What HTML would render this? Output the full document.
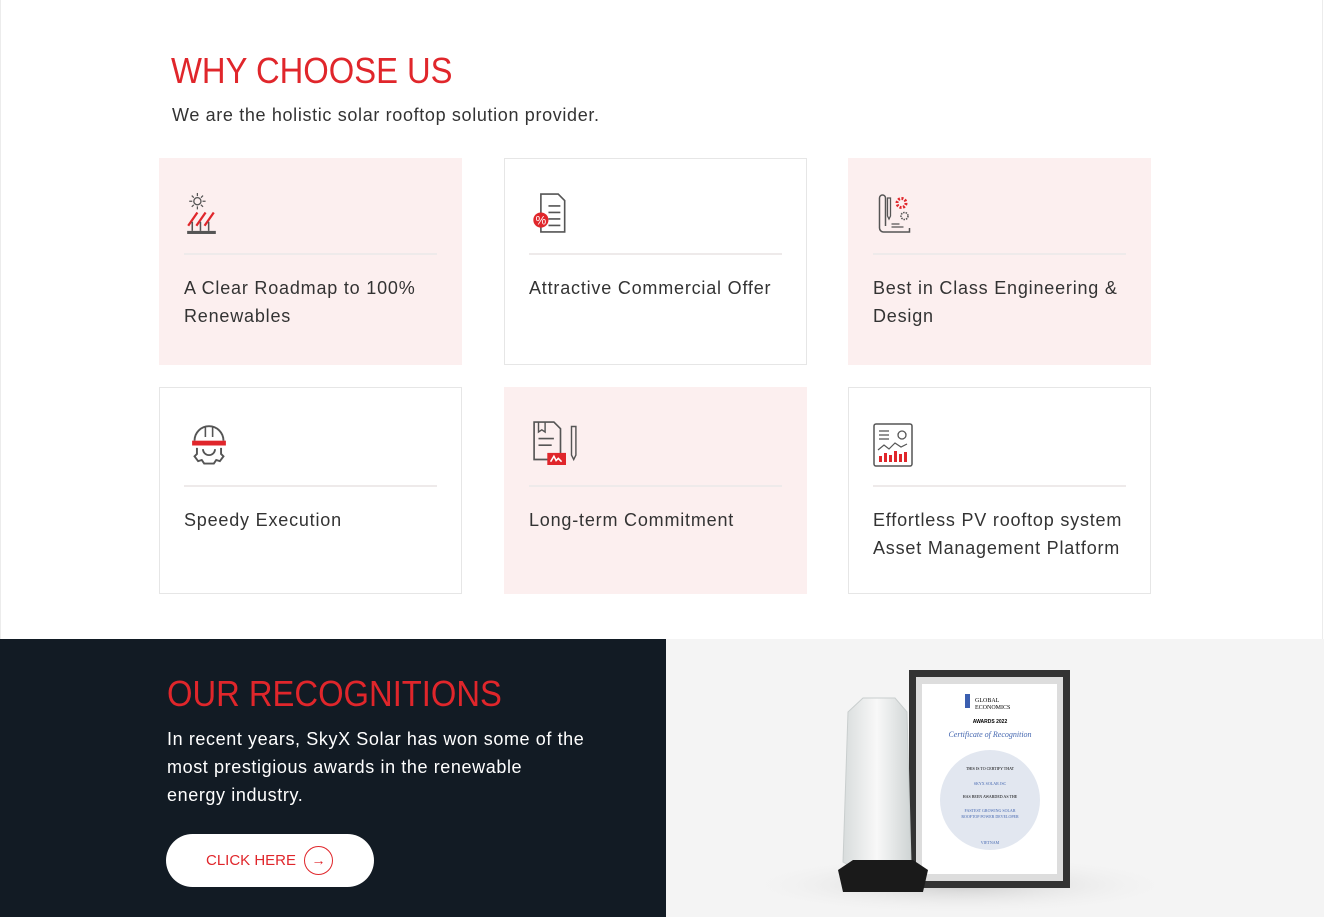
<!DOCTYPE html>
<html><head><meta charset="utf-8"><style>
*{margin:0;padding:0;box-sizing:border-box}
body{width:1324px;height:917px;overflow:hidden;background:#fff;font-family:"Liberation Sans",sans-serif;position:relative}
.edge{position:absolute;top:0;bottom:278px;width:1px;background:#ececec}
h2{position:absolute;font-weight:normal;color:#e0262b;font-size:36px;transform:scaleX(0.91);transform-origin:left top;white-space:nowrap}
.sub{position:absolute;left:172px;top:105px;font-size:18px;color:#333;letter-spacing:0.65px}
.card{position:absolute;width:303px;height:207px;border:1px solid #e6e6e6;background:#fff}
.card.p{background:#fcefef;border-color:#fcefef}
.card svg{position:absolute}
.card .ln{position:absolute;left:24px;right:24px;top:94px;height:2px;background:#eeeaea}
.card .t{position:absolute;left:24px;top:115px;font-size:18px;line-height:28px;color:#333;width:270px;letter-spacing:0.8px}
.dark{position:absolute;left:0;top:639px;width:666px;height:278px;background:#121b24}
.light{position:absolute;left:666px;top:639px;width:658px;height:278px;background:#f4f4f4}
.dark p{position:absolute;left:167px;top:86px;width:460px;font-size:18px;line-height:28px;color:#fff;letter-spacing:0.6px;white-space:nowrap}
.btn{position:absolute;left:166px;top:195px;width:208px;height:53px;border-radius:27px;background:#fff;color:#e0262b;font-size:15px}
.btn span{position:absolute;left:40px;top:18px}
.btn i{position:absolute;left:138px;top:12px;width:29px;height:29px;border:1px solid #e0262b;border-radius:50%;font-style:normal;text-align:center;line-height:26px;font-size:14px}
</style></head><body>
<div class="edge" style="left:0"></div><div class="edge" style="left:1322px"></div>
<h2 style="left:171px;top:50px">WHY CHOOSE US</h2>
<div class="sub">We are the holistic solar rooftop solution provider.</div>

<div class="card p" style="left:159px;top:158px">
<svg style="left:20px;top:33px" width="44" height="43" viewBox="2 3 31 42"><circle cx="13" cy="12" r="3.5" fill="none" stroke="#555" stroke-width="1.3"/><g stroke="#555" stroke-width="1.2"><path d="M13 4v3M13 17v3M5 12h3M18 12h3M7.5 6.5l2 2M16.5 15.5l2 2M18.5 6.5l-2 2M9.5 15.5l-2 2"/></g><g stroke="#e0262b" stroke-width="2.2"><path d="M4 36l9-13M12 36l9-13M20 36l9-13"/></g><g stroke="#555" stroke-width="1.5"><path d="M8 32v9M16 32v9M24 32v9"/></g><rect x="3" y="41" width="28" height="3" fill="#555"/></svg>
<div class="ln"></div><div class="t">A Clear Roadmap to 100% Renewables</div></div>

<div class="card" style="left:504px;top:158px">
<svg style="left:24px;top:34px" width="40" height="40" viewBox="2 4 31 37"><path d="M10 5h16l6 6v29H10z" fill="#fff" stroke="#555" stroke-width="1.5"/><path d="M17 16h11M17 22h11M17 28h11M17 34h11" stroke="#555" stroke-width="1.5"/><circle cx="10" cy="29" r="7" fill="#e0262b"/><text x="10" y="33" font-size="11" fill="#fff" text-anchor="middle" font-family="Liberation Sans">%</text></svg>
<div class="ln"></div><div class="t">Attractive Commercial Offer</div></div>

<div class="card p" style="left:848px;top:158px">
<svg style="left:26px;top:35px" width="39" height="39" viewBox="5 4 32 39"><path d="M6 8v30a4 4 0 004 4h26v-4M6 8a3 3 0 016 0v28" fill="none" stroke="#555" stroke-width="1.5"/><path d="M14 8h3v18l-1.5 3-1.5-3z" fill="none" stroke="#555" stroke-width="1.3"/><path d="M18 34h8M18 37h12" stroke="#555" stroke-width="1.3"/><circle cx="28" cy="13" r="4.5" fill="none" stroke="#e0262b" stroke-width="3" stroke-dasharray="2 1.5"/><circle cx="31" cy="26" r="3.5" fill="none" stroke="#555" stroke-width="1.6" stroke-dasharray="1.5 1"/></svg>
<div class="ln"></div><div class="t">Best in Class Engineering &amp; Design</div></div>

<div class="card" style="left:159px;top:387px">
<svg style="left:30px;top:37px" width="38" height="41" viewBox="7 7 30 34"><path d="M10 20a12 12 0 0124 0" fill="none" stroke="#555" stroke-width="1.6"/><path d="M19 9v8M25 9v8" stroke="#555" stroke-width="1.3"/><rect x="8" y="20" width="28" height="4" fill="#e0262b"/><path d="M12 26v5l-2 2 3 4 3-1 2 3h8l2-3 3 1 3-4-2-2v-5" fill="none" stroke="#555" stroke-width="1.6"/><path d="M17 27a5 5 0 0010 0" fill="none" stroke="#555" stroke-width="1.5"/></svg>
<div class="ln" style="top:97px"></div><div class="t" style="top:118px">Speedy Execution</div></div>

<div class="card p" style="left:504px;top:387px">
<svg style="left:26px;top:33px" width="48" height="44" viewBox="3 3 40 40"><path d="M4 4h18l6 6v28H4z" fill="none" stroke="#555" stroke-width="1.5"/><path d="M8 4v9l3-2 3 2V4" fill="none" stroke="#555" stroke-width="1.3"/><path d="M8 19h14M8 25h12" stroke="#555" stroke-width="1.5"/><rect x="16" y="32" width="17" height="11" fill="#e0262b"/><path d="M19 40l3-5 2 4 2-2 3 3" stroke="#fff" fill="none" stroke-width="1.4"/><path d="M38 8v26l2 4 2-4V8z" fill="none" stroke="#555" stroke-width="1.3"/></svg>
<div class="ln" style="top:97px"></div><div class="t" style="top:118px">Long-term Commitment</div></div>

<div class="card" style="left:848px;top:387px">
<svg style="left:24px;top:34px" width="40" height="46" viewBox="2 3 40 44"><rect x="3" y="4" width="38" height="42" rx="2" fill="none" stroke="#555" stroke-width="1.5"/><path d="M8 11h10M8 15h10M8 19h10" stroke="#555" stroke-width="1.3"/><circle cx="31" cy="15" r="4" fill="none" stroke="#555" stroke-width="1.3"/><path d="M7 30l6-5 5 4 6-6 6 4 6-3" fill="none" stroke="#555" stroke-width="1.2"/><g fill="#e0262b"><rect x="8" y="36" width="3" height="6"/><rect x="13" y="33" width="3" height="9"/><rect x="18" y="35" width="3" height="7"/><rect x="23" y="31" width="3" height="11"/><rect x="28" y="34" width="3" height="8"/><rect x="33" y="32" width="3" height="10"/></g></svg>
<div class="ln" style="top:97px"></div><div class="t" style="top:118px">Effortless PV rooftop system Asset Management Platform</div></div>

<div class="dark">
<h2 style="left:167px;top:34px">OUR RECOGNITIONS</h2>
<p>In recent years, SkyX Solar has won some of the<br>most prestigious awards in the renewable<br>energy industry.</p>
<div class="btn"><span>CLICK HERE</span><i>→</i></div>
</div>
<div class="light">
<svg width="658" height="278" viewBox="666 639 658 278" style="position:absolute;left:0;top:0">
<defs><radialGradient id="sh" cx="0.5" cy="0.5" r="0.5"><stop offset="0" stop-color="#ccc"/><stop offset="1" stop-color="#f4f4f4" stop-opacity="0"/></radialGradient>
<linearGradient id="gl" x1="0" x2="1"><stop offset="0" stop-color="#d8dcdc"/><stop offset="0.5" stop-color="#f8f8f8"/><stop offset="1" stop-color="#cfd4d4"/></linearGradient></defs>
<ellipse cx="960" cy="885" rx="220" ry="30" fill="url(#sh)"/>
<rect x="909" y="670" width="161" height="218" fill="#333"/>
<rect x="916" y="677" width="147" height="204" fill="#ddd"/>
<rect x="922" y="684" width="135" height="190" fill="#fff"/>
<circle cx="990" cy="800" r="50" fill="#e2e7f0"/>
<text x="990" y="723" font-size="5" text-anchor="middle" font-family="Liberation Sans" font-weight="bold">AWARDS 2022</text>
<text x="990" y="737" font-size="8" text-anchor="middle" fill="#4467b0" font-style="italic" font-family="Liberation Serif">Certificate of Recognition</text>
<rect x="965" y="694" width="5" height="14" fill="#3b5fb0"/>
<text x="975" y="702" font-size="6" font-family="Liberation Serif">GLOBAL</text>
<text x="975" y="709" font-size="6" font-family="Liberation Serif">ECONOMICS</text>
<text x="990" y="770" font-size="4" text-anchor="middle" font-family="Liberation Serif">THIS IS TO CERTIFY THAT</text>
<text x="990" y="785" font-size="4" text-anchor="middle" fill="#4467b0" font-family="Liberation Serif">SKYX SOLAR JSC</text>
<text x="990" y="798" font-size="4" text-anchor="middle" font-family="Liberation Serif">HAS BEEN AWARDED AS THE</text>
<text x="990" y="812" font-size="4" text-anchor="middle" fill="#4467b0" font-family="Liberation Serif">FASTEST GROWING SOLAR</text>
<text x="990" y="818" font-size="4" text-anchor="middle" fill="#4467b0" font-family="Liberation Serif">ROOFTOP POWER DEVELOPER</text>
<text x="990" y="844" font-size="4" text-anchor="middle" fill="#4467b0" font-family="Liberation Serif">VIETNAM</text>
<path d="M848 712l15-14h32l12 14 4 150-20 10h-30l-18-10z" fill="url(#gl)" stroke="#c9cece"/>
<path d="M838 870l15-10h60l15 10-5 22h-80z" fill="#1a1a1a"/>
</svg>
</div>
</body></html>
